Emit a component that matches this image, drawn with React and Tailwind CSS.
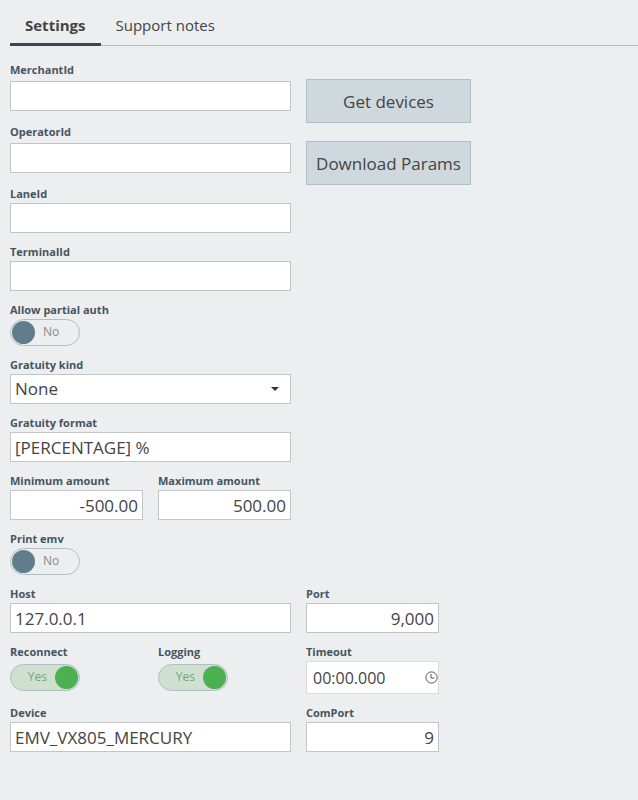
import { useId, useState } from "react";

const boxClass =
  "h-[30px] w-full min-w-0 border border-[#c4c4c4] bg-white px-1 text-[17px] leading-7 text-[#444444] outline-none focus:border-[#607d8b]";

function Field({ label, id, className = "", children }) {
  return (
    <div className={`flex flex-col pb-[10px] ${className}`}>
      <label htmlFor={id} className="h-[18px] text-[11px] leading-[18px] font-bold whitespace-nowrap text-[#455560]">
        {label}
      </label>
      <div className="flex flex-1 items-center">{children}</div>
    </div>
  );
}

function TextField({ label, value = "", className, numeric = false }) {
  const id = useId();
  return (
    <Field label={label} id={id} className={className}>
      <input id={id} type="text" defaultValue={value} className={`${boxClass} ${numeric ? "text-right" : ""}`} />
    </Field>
  );
}

function SelectField({ label, options, className }) {
  const id = useId();
  return (
    <Field label={label} id={id} className={className}>
      <div className="relative w-full">
        <select id={id} className={`${boxClass} block appearance-none`}>
          {options.map((option) => (
            <option key={option}>{option}</option>
          ))}
        </select>
        <svg viewBox="0 0 8 4" className="pointer-events-none absolute top-[13px] right-3 h-1 w-2" aria-hidden="true">
          <path d="M0 0h8L4 4z" fill="#333" />
        </svg>
      </div>
    </Field>
  );
}

function SwitchField({ label, on = false, className }) {
  const id = useId();
  const [checked, setChecked] = useState(on);
  return (
    <Field label={label} id={id} className={className}>
      <label
        className={`flex h-[27px] w-[70px] cursor-pointer items-center rounded-full border border-[#b0bec5] px-px text-[12px] leading-5 ${
          checked ? "flex-row-reverse bg-[#cfe0d1] text-[#75a578]" : "text-[#8a8a8a]"
        }`}
      >
        <input
          id={id}
          type="checkbox"
          role="switch"
          checked={checked}
          onChange={() => setChecked(!checked)}
          className="sr-only"
        />
        <span className={`size-[23px] shrink-0 rounded-full ${checked ? "bg-[#4caf50]" : "bg-[#607d8b]"}`} />
        <span className="px-2 pb-[2px]">{checked ? "Yes" : "No"}</span>
      </label>
    </Field>
  );
}

function TimeField({ label, value, className }) {
  const id = useId();
  return (
    <Field label={label} id={id} className={className}>
      <div className="flex h-[33px] w-full items-center border border-[#dcdcdc] bg-white">
        <input
          id={id}
          type="text"
          defaultValue={value}
          className="min-w-0 flex-1 bg-transparent pl-[6px] text-[16px] leading-7 text-[#444444] outline-none"
        />
        <button type="button" aria-label="Pick a time" className="shrink-0">
          <svg viewBox="0 0 13 13" className="size-[13px]" fill="none" stroke="#555">
            <circle cx="6.5" cy="6.5" r="5.6" />
            <path d="M6 2.8V7h3.4" />
          </svg>
        </button>
      </div>
    </Field>
  );
}

function ActionButton({ children }) {
  return (
    <div className="pt-[18px]">
      <button
        type="button"
        className="h-11 w-full border border-[#b0bec5] bg-[#cfd8dc] pt-[2px] text-[17px] whitespace-nowrap text-[#444444]"
      >
        {children}
      </button>
    </div>
  );
}

export default function App() {
  return (
    <main className="min-h-screen bg-[#eceef0] font-['Open_Sans','Noto_Sans',sans-serif] text-[#444444]">
      <div role="tablist" className="ml-[10px] flex h-[46px] border-b border-[#b0bec5]">
        <button
          type="button"
          role="tab"
          aria-selected="true"
          className="-mb-px border-b-[3px] border-[#37474f] px-[15px] pt-[8px] text-[15px] font-bold"
        >
          Settings
        </button>
        <button type="button" role="tab" aria-selected="false" className="px-[15px] pt-[6px] text-[15px]">
          Support notes
        </button>
      </div>

      <form className="grid grid-cols-[133px_133px_165px] gap-x-[15px] px-[10px] pt-[15px]">
        <TextField label="MerchantId" className="col-span-2" />
        <ActionButton>Get devices</ActionButton>

        <TextField label="OperatorId" className="col-span-2" />
        <ActionButton>Download Params</ActionButton>

        <TextField label="LaneId" className="col-span-2 col-start-1" />
        <TextField label="TerminalId" className="col-span-2 col-start-1" />
        <SwitchField label="Allow partial auth" className="col-span-2 col-start-1" />
        <SelectField label="Gratuity kind" options={["None", "Percentage", "Amount"]} className="col-span-2 col-start-1" />
        <TextField label="Gratuity format" value="[PERCENTAGE] %" className="col-span-2 col-start-1" />

        <TextField label="Minimum amount" value="-500.00" numeric className="col-start-1" />
        <TextField label="Maximum amount" value="500.00" numeric />
        <SwitchField label="Print emv" className="col-span-2 col-start-1" />

        <TextField label="Host" value="127.0.0.1" className="col-span-2 col-start-1" />
        <TextField label="Port" value="9,000" numeric className="w-[133px]" />

        <SwitchField label="Reconnect" on />
        <SwitchField label="Logging" on />
        <TimeField label="Timeout" value="00:00.000" className="w-[133px]" />

        <TextField label="Device" value="EMV_VX805_MERCURY" className="col-span-2" />
        <TextField label="ComPort" value="9" numeric className="w-[133px]" />
      </form>
    </main>
  );
}
